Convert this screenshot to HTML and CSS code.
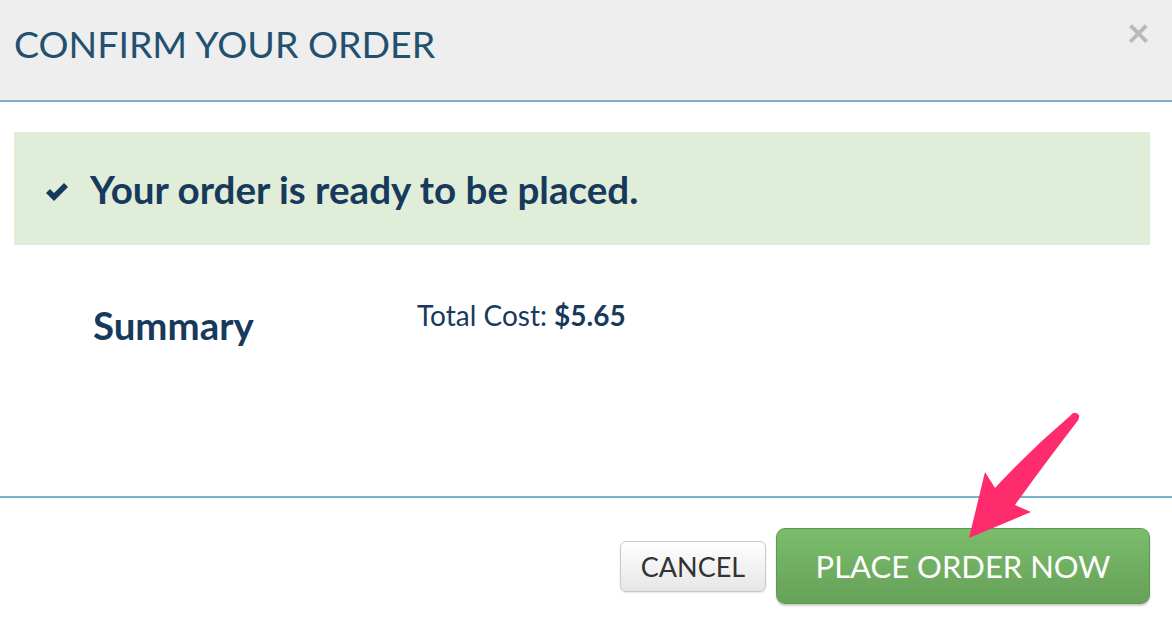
FILE: index.html
```html
<!DOCTYPE html>
<html lang="en">
<head>
    <meta charset="UTF-8">
    <title>Confirm your order</title>
    <link rel="stylesheet" href="styles.css">
</head>
<body>
    <div class="modal">
        <div class="modal-header">
            <h2>CONFIRM YOUR ORDER</h2>
            <span class="close">&times;</span>
        </div>

        <div class="modal-body">
            <div class="alert">
                <svg class="check" width="24" height="20" viewBox="0 0 24 20">
                    <path d="M1 11 L5 7 L9 11 L19 1 L23 5 L9 19 Z" fill="#173a5c"/>
                </svg>
                <span>Your order is ready to be placed.</span>
            </div>

            <div class="summary">
                <h3>Summary</h3>
                <p>Total Cost: <b>$5.65</b></p>
            </div>
        </div>

        <div class="modal-footer">
            <button class="btn btn-cancel">CANCEL</button>
            <button class="btn btn-place">PLACE ORDER NOW</button>
        </div>

        <!-- seta de destaque -->
        <svg class="arrow" width="1172" height="618" viewBox="0 0 1172 618">
            <path d="M1070 416 Q1074 410 1079 415 Q1080 419 1076 423 Q1040 470 1015 505 L1031 512 L969 538 L985 472 L995 488 Q1030 450 1070 416 Z" fill="#fe2c6c"/>
        </svg>
    </div>
</body>
</html>
```

FILE: styles.css
```css
body {
    margin: 0;
    background-color: #fff;
    font-family: Lato, "Open Sans", sans-serif;
    color: #173a5c;
}

.modal {
    position: relative;
    width: 1172px;
    height: 618px;
    overflow: hidden;
}

.modal-header {
    background-color: #eeeeee;
    height: 100px;
    border-bottom: 2px solid #7ab3c9;
    display: flex;
    justify-content: space-between;
    align-items: flex-start;
    padding: 0 22px 0 14px;
}

.modal-header h2 {
    margin: 0;
    padding-top: 21px;
    font-size: 37.5px;
    font-weight: 400;
    color: #22506e;
}

.close {
    color: #b9b9b9;
    font-size: 40px;
    font-weight: 700;
    line-height: 1;
    margin-top: 12px;
}

.modal-body {
    padding: 30px 22px 0 14px;
    height: 364px;
    border-bottom: 2px solid #7ab3c9;
}

.alert {
    background-color: #e0eed9;
    height: 113px;
    display: flex;
    align-items: center;
    gap: 21px;
    padding-left: 31px;
    font-size: 38.6px;
    font-weight: 700;
}

.check {
    margin-top: 6px;
}

.summary {
    display: flex;
    align-items: flex-start;
    padding-left: 79px;
    margin-top: 50px;
}

.summary h3 {
    margin: 0;
    width: 324px;
    font-size: 38.4px;
    font-weight: 700;
    line-height: 60px;
}

.summary p {
    margin: 0;
    font-size: 28px;
    line-height: 40px;
}

.modal-footer {
    display: flex;
    justify-content: flex-end;
    align-items: center;
    gap: 10px;
    padding: 30px 22px 0 0;
}

.btn {
    font-family: Lato, "Open Sans", sans-serif;
    cursor: pointer;
}

.btn-cancel {
    height: 51px;
    width: 146px;
    font-size: 27px;
    color: #333;
    background: linear-gradient(#ffffff, #e6e6e6);
    border: 1px solid #c8c8c8;
    border-radius: 6px;
    box-shadow: 0 1px 2px rgba(0, 0, 0, 0.1);
}

.btn-place {
    height: 76px;
    width: 374px;
    font-size: 31px;
    color: #fff;
    background: linear-gradient(#7bbd6c, #66a158);
    border: 1px solid #5a9a4e;
    border-radius: 9px;
    box-shadow: 0 2px 2px rgba(0, 0, 0, 0.2);
}

.arrow {
    position: absolute;
    top: 0;
    left: 0;
    pointer-events: none;
}
```
